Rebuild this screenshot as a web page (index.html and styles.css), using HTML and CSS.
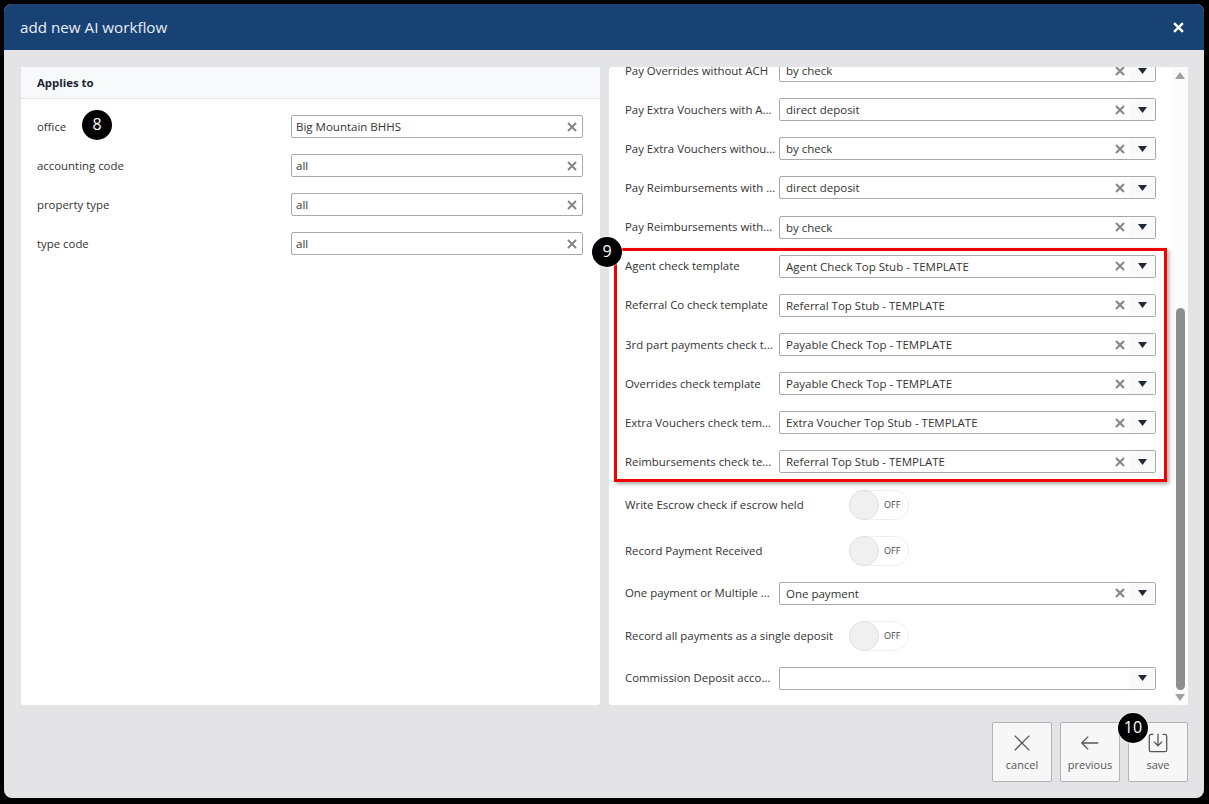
FILE: index.html
```html
<!DOCTYPE html>
<html lang="en">
  <head>
    <meta charset="UTF-8" />
    <title>add new AI workflow</title>
    <link rel="stylesheet" href="styles.css">
  </head>
  <body>
    <svg class="defs" width="0" height="0">
      <symbol id="clear" viewBox="0 0 10 10">
        <path d="M1 1L9 9M9 1L1 9" fill="none" stroke="#858585" stroke-width="2" />
      </symbol>
      <symbol id="caret" viewBox="0 0 9 6">
        <path d="M0 0H9L4.5 6Z" fill="#1f2a36" />
      </symbol>
    </svg>

    <div class="modal">
      <div class="modal-head">
        <span class="modal-title">add new AI workflow</span>
        <svg class="modal-close" viewBox="0 0 10 10">
          <path d="M1 1L9 9M9 1L1 9" fill="none" stroke="#fff" stroke-width="2.2" />
        </svg>
      </div>

      <div class="modal-body">
        <div class="panel">
          <div class="panel-head">Applies to</div>
          <div class="applies">
            <div class="row">
              <label class="row-label wide">office</label>
              <div class="select short">
                <span class="select-value">Big Mountain BHHS</span>
                <svg class="clear"><use href="#clear" /></svg>
              </div>
            </div>
            <div class="row">
              <label class="row-label wide">accounting code</label>
              <div class="select short">
                <span class="select-value">all</span>
                <svg class="clear"><use href="#clear" /></svg>
              </div>
            </div>
            <div class="row">
              <label class="row-label wide">property type</label>
              <div class="select short">
                <span class="select-value">all</span>
                <svg class="clear"><use href="#clear" /></svg>
              </div>
            </div>
            <div class="row">
              <label class="row-label wide">type code</label>
              <div class="select short">
                <span class="select-value">all</span>
                <svg class="clear"><use href="#clear" /></svg>
              </div>
            </div>
          </div>
          <span class="badge badge-8">8</span>
        </div>

        <div class="panel panel-right">
          <div class="scroller">
            <div class="settings">
              <div class="row">
                <label class="row-label">Pay Overrides without ACH</label>
                <div class="select"><span class="select-value">by check</span><svg class="clear"><use href="#clear" /></svg><span class="caret-box"><svg class="caret"><use href="#caret" /></svg></span></div>
              </div>
              <div class="row">
                <label class="row-label">Pay Extra Vouchers with A...</label>
                <div class="select"><span class="select-value">direct deposit</span><svg class="clear"><use href="#clear" /></svg><span class="caret-box"><svg class="caret"><use href="#caret" /></svg></span></div>
              </div>
              <div class="row">
                <label class="row-label">Pay Extra Vouchers withou...</label>
                <div class="select"><span class="select-value">by check</span><svg class="clear"><use href="#clear" /></svg><span class="caret-box"><svg class="caret"><use href="#caret" /></svg></span></div>
              </div>
              <div class="row">
                <label class="row-label">Pay Reimbursements with ...</label>
                <div class="select"><span class="select-value">direct deposit</span><svg class="clear"><use href="#clear" /></svg><span class="caret-box"><svg class="caret"><use href="#caret" /></svg></span></div>
              </div>
              <div class="row">
                <label class="row-label">Pay Reimbursements with...</label>
                <div class="select"><span class="select-value">by check</span><svg class="clear"><use href="#clear" /></svg><span class="caret-box"><svg class="caret"><use href="#caret" /></svg></span></div>
              </div>
              <div class="row">
                <label class="row-label">Agent check template</label>
                <div class="select"><span class="select-value">Agent Check Top Stub - TEMPLATE</span><svg class="clear"><use href="#clear" /></svg><span class="caret-box"><svg class="caret"><use href="#caret" /></svg></span></div>
              </div>
              <div class="row">
                <label class="row-label">Referral Co check template</label>
                <div class="select"><span class="select-value">Referral Top Stub - TEMPLATE</span><svg class="clear"><use href="#clear" /></svg><span class="caret-box"><svg class="caret"><use href="#caret" /></svg></span></div>
              </div>
              <div class="row">
                <label class="row-label">3rd part payments check t...</label>
                <div class="select"><span class="select-value">Payable Check Top - TEMPLATE</span><svg class="clear"><use href="#clear" /></svg><span class="caret-box"><svg class="caret"><use href="#caret" /></svg></span></div>
              </div>
              <div class="row">
                <label class="row-label">Overrides check template</label>
                <div class="select"><span class="select-value">Payable Check Top - TEMPLATE</span><svg class="clear"><use href="#clear" /></svg><span class="caret-box"><svg class="caret"><use href="#caret" /></svg></span></div>
              </div>
              <div class="row">
                <label class="row-label">Extra Vouchers check tem...</label>
                <div class="select"><span class="select-value">Extra Voucher Top Stub - TEMPLATE</span><svg class="clear"><use href="#clear" /></svg><span class="caret-box"><svg class="caret"><use href="#caret" /></svg></span></div>
              </div>
              <div class="row">
                <label class="row-label">Reimbursements check te...</label>
                <div class="select"><span class="select-value">Referral Top Stub - TEMPLATE</span><svg class="clear"><use href="#clear" /></svg><span class="caret-box"><svg class="caret"><use href="#caret" /></svg></span></div>
              </div>
              <div class="row toggle-row">
                <label class="toggle-label">Write Escrow check if escrow held</label>
                <div class="toggle"><span class="knob"></span><span class="toggle-text">OFF</span></div>
              </div>
              <div class="row toggle-row">
                <label class="toggle-label">Record Payment Received</label>
                <div class="toggle"><span class="knob"></span><span class="toggle-text">OFF</span></div>
              </div>
              <div class="row">
                <label class="row-label">One payment or Multiple ...</label>
                <div class="select"><span class="select-value">One payment</span><svg class="clear"><use href="#clear" /></svg><span class="caret-box"><svg class="caret"><use href="#caret" /></svg></span></div>
              </div>
              <div class="row toggle-row">
                <label class="toggle-label">Record all payments as a single deposit</label>
                <div class="toggle"><span class="knob"></span><span class="toggle-text">OFF</span></div>
              </div>
              <div class="row">
                <label class="row-label">Commission Deposit acco...</label>
                <div class="select"><span class="select-value"></span><span class="caret-box"><svg class="caret"><use href="#caret" /></svg></span></div>
              </div>
            </div>
          </div>

          <div class="scrollbar">
            <span class="arrow-up"></span>
            <div class="track"><div class="thumb"></div></div>
            <span class="arrow-down"></span>
          </div>

          <div class="highlight"></div>
          <span class="badge badge-9">9</span>
        </div>
      </div>

      <div class="modal-foot">
        <button class="action">
          <svg class="action-icon" viewBox="0 0 24 24">
            <path d="M4 4L20 20M20 4L4 20" />
          </svg>
          cancel
        </button>
        <button class="action">
          <svg class="action-icon" viewBox="0 0 24 24">
            <path d="M21 12H3M10 5L3 12L10 19" />
          </svg>
          previous
        </button>
        <button class="action">
          <svg class="action-icon" viewBox="0 0 24 24">
            <path d="M7 2.500H4.500A2 2 0 0 0 2.500 4.500V19.500A2 2 0 0 0 4.500 21.500H19.500A2 2 0 0 0 21.500 19.500V4.500A2 2 0 0 0 19.500 2.500H17M12 2V15M7.500 10.500L12 15L16.500 10.500" />
          </svg>
          save
        </button>
        <span class="badge badge-10">10</span>
      </div>
    </div>
  </body>
</html>
```

FILE: styles.css
```css
* {
  padding: 0;
  margin: 0;
  box-sizing: border-box;
}
html,
body {
  height: 100%;
}
body {
  background: #000;
  padding: 4px 5px 6px 4px;
  font-family: "Open Sans", "Liberation Sans", sans-serif;
  font-size: 11.4px;
  color: #333;
  overflow: hidden;
}
.defs {
  position: absolute;
}

.modal {
  display: flex;
  flex-direction: column;
  height: 100%;
  background: #e4e4e6;
  border-radius: 8px;
  overflow: hidden;
}
.modal-head {
  display: flex;
  align-items: center;
  justify-content: space-between;
  flex: none;
  height: 46px;
  padding: 0 20px 0 16px;
  background: #174273;
}
.modal-title {
  font-size: 15.2px;
  color: #e8edf3;
}
.modal-close {
  width: 11px;
  height: 11px;
}

.modal-body {
  display: flex;
  gap: 9px;
  height: 638px;
  margin: 17px 16px 0 17px;
}
.panel {
  position: relative;
  flex: 1;
  background: #fff;
  border-radius: 3px;
}
.panel-head {
  height: 32px;
  padding: 0 16px;
  line-height: 31px;
  font-weight: 700;
  color: #1c2430;
  background: #f8f9fb;
  border-bottom: 1px solid #e3e5e9;
}
.applies {
  padding: 8px 17px 0 16px;
}

.row {
  display: flex;
  align-items: center;
  height: 39.15px;
}
.row-label {
  flex: none;
  width: 154px;
  padding-bottom: 1px;
  white-space: nowrap;
}
.row-label.wide {
  width: 254px;
}
.select {
  display: flex;
  align-items: center;
  flex: 1;
  height: 23px;
  padding-left: 6px;
  font-size: 11.5px;
  background: #fff;
  border: 1px solid #a9a9a9;
  border-radius: 2px;
}
.select.short {
  padding-left: 4px;
  padding-right: 5px;
}
.select-value {
  flex: 1;
  white-space: nowrap;
}
.clear {
  flex: none;
  width: 10px;
  height: 10px;
}
.caret-box {
  display: flex;
  align-items: center;
  justify-content: center;
  flex: none;
  width: 26px;
  height: 21px;
  margin-left: 4px;
  background: #fafafa;
}
.caret {
  width: 9px;
  height: 6px;
}

.panel-right {
  display: flex;
}
.scroller {
  flex: 1;
  overflow: hidden;
}
.settings {
  margin-top: -16px;
  padding: 0 16px;
}
.toggle-row {
  height: 46px;
}
.toggle-row + .row:not(.toggle-row) {
  height: 39px;
}
.toggle-label {
  flex: none;
  width: 224px;
  white-space: nowrap;
}
.toggle {
  display: flex;
  align-items: center;
  width: 60px;
  height: 30px;
  background: #fff;
  border: 1px solid #efefef;
  border-radius: 15px;
}
.knob {
  flex: none;
  width: 30px;
  height: 30px;
  margin-left: -1px;
  background: #f0f0f0;
  border: 1px solid #e0e0e0;
  border-radius: 50%;
}
.toggle-text {
  margin-left: 5px;
  font-size: 9px;
  color: #444;
}

.scrollbar {
  display: flex;
  flex-direction: column;
  align-items: center;
  flex: none;
  width: 16px;
  padding: 5px 0 4px;
  background: #fbfbfb;
}
.arrow-up,
.arrow-down {
  flex: none;
  width: 0;
  height: 0;
  border-left: 5px solid transparent;
  border-right: 5px solid transparent;
}
.arrow-up {
  border-bottom: 7px solid #a0a0a0;
}
.arrow-down {
  border-top: 7px solid #a0a0a0;
}
.track {
  display: flex;
  flex-direction: column;
  justify-content: flex-end;
  flex: 1;
  width: 9px;
  padding-bottom: 4px;
}
.thumb {
  height: 382px;
  background: #8e8e8e;
  border-radius: 5px;
}

.highlight {
  position: absolute;
  left: 5px;
  top: 181px;
  width: 553px;
  height: 234px;
  border: 3px solid #f00000;
  box-shadow: 2px 2px 4px rgba(0, 0, 0, 0.35);
  pointer-events: none;
}
.badge {
  position: absolute;
  width: 30px;
  height: 30px;
  font-size: 16px;
  line-height: 28px;
  text-align: center;
  color: #fff;
  background: #000;
  border-radius: 50%;
  box-shadow: 0 0 0 1px rgba(255, 255, 255, 0.5);
}
.badge-8 {
  left: 61px;
  top: 43px;
}
.badge-9 {
  left: -17px;
  top: 170px;
}
.badge-10 {
  right: 56px;
  top: 8px;
}

.modal-foot {
  position: relative;
  display: flex;
  justify-content: flex-end;
  gap: 8px;
  flex: 1;
  padding: 17px 16px 0 0;
}
.action {
  display: flex;
  flex-direction: column;
  align-items: center;
  width: 60px;
  height: 60px;
  padding-top: 9px;
  font-family: inherit;
  font-size: 11px;
  color: #555;
  background: #f7f7f7;
  border: 1px solid #b4b4b4;
  border-radius: 2px;
}
.action-icon {
  width: 22px;
  height: 22px;
  margin-bottom: 3px;
  fill: none;
  stroke: #555;
  stroke-width: 1.4;
}
```
